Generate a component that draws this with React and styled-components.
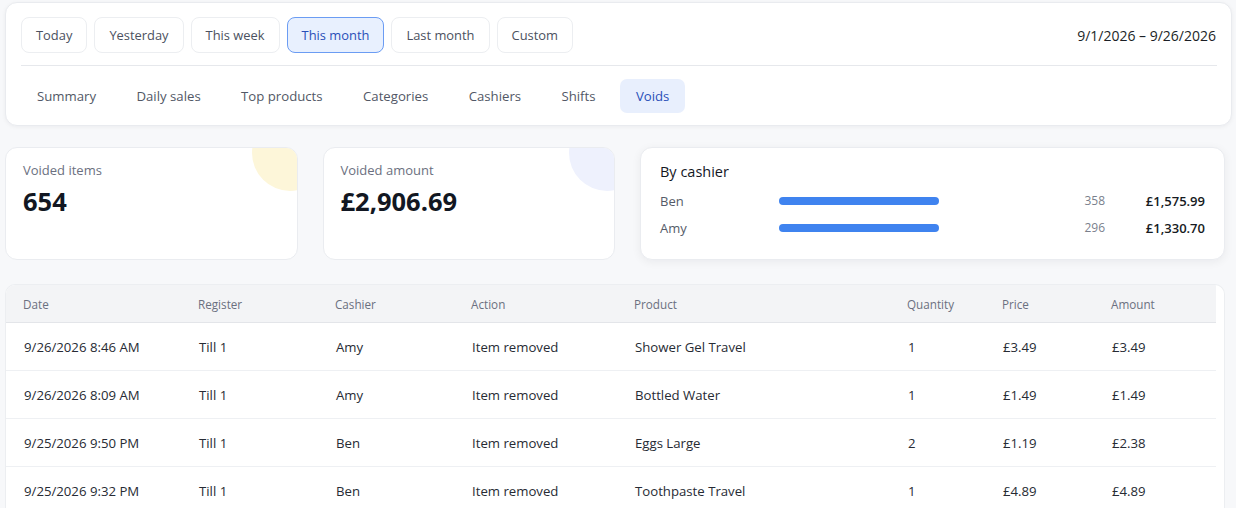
import React from "react";
import styled, { createGlobalStyle } from "styled-components";

const GlobalStyle = createGlobalStyle`
  * { box-sizing: border-box; }
  html, body { margin: 0; padding: 0; }
  body {
    background: #f7f8fa;
    font-family: "Open Sans", "Noto Sans", sans-serif;
    color: #1f2430;
    overflow: hidden;
  }
`;

const Page = styled.div`
  display: flex;
  flex-direction: column;
  height: 100vh;
  padding: 2px 4px 0 5px;
`;

const TopCard = styled.div`
  background: #fff;
  border: 1px solid #e9ebef;
  border-radius: 12px;
  box-shadow: 0 1px 4px rgba(16, 24, 40, 0.05);
  padding: 14px 14px 12px 15px;
`;

const TopRow = styled.div`
  display: flex;
  align-items: center;
  justify-content: space-between;
`;

const Presets = styled.div`
  display: flex;
  gap: 7px;
`;

const PresetButton = styled.button`
  height: 36px;
  padding: 0 14px;
  border-radius: 8px;
  font-family: inherit;
  font-size: 12.9px;
  font-weight: 500;
  cursor: pointer;
  border: 1px solid ${(p) => (p.$active ? "#6b9cf3" : "#eceef1")};
  background: ${(p) => (p.$active ? "#e8f0fe" : "#fff")};
  color: ${(p) => (p.$active ? "#2a4fb8" : "#4b5160")};
`;

const RangeText = styled.div`
  font-size: 14px;
  font-weight: 500;
  color: #1c1f26;
  padding-right: 1px;
`;

const Divider = styled.div`
  height: 1px;
  background: #e6e8ec;
  margin: 12px 0 13px;
`;

const Tabs = styled.div`
  display: flex;
  gap: 8.4px;
`;

const Tab = styled.button`
  height: 34px;
  padding: 0 16px;
  border: none;
  border-radius: 7px;
  font-family: inherit;
  font-size: 13.2px;
  font-weight: 500;
  cursor: pointer;
  background: ${(p) => (p.$active ? "#e8effd" : "transparent")};
  color: ${(p) => (p.$active ? "#2a4fb8" : "#525866")};
`;

const Stats = styled.div`
  display: grid;
  grid-template-columns: 1fr 1fr 2fr;
  gap: 25px;
  margin-top: 21px;
  margin-right: 7px;
`;

const StatCard = styled.div`
  position: relative;
  overflow: hidden;
  height: 113px;
  background: #fff;
  border: 1px solid #eaecf0;
  border-radius: 12px;
  padding: 13px 17px;
`;

const Blob = styled.div`
  position: absolute;
  top: -33px;
  right: -31px;
  width: 76px;
  height: 76px;
  border-radius: 50%;
  background: ${(p) => p.$color};
`;

const StatLabel = styled.div`
  font-size: 13px;
  color: #6b7080;
`;

const StatValue = styled.div`
  margin-top: 5px;
  font-size: 25.5px;
  font-weight: 700;
  color: #121722;
`;

const CashierCard = styled.div`
  height: 113px;
  background: #fff;
  border: 1px solid #eaecf0;
  border-radius: 12px;
  box-shadow: 0 2px 10px rgba(16, 24, 40, 0.06);
  padding: 14px 19px 0 19px;
`;

const CardTitle = styled.div`
  font-size: 14.5px;
  font-weight: 500;
  color: #14171f;
  margin-bottom: 6px;
`;

const CashierRow = styled.div`
  display: grid;
  grid-template-columns: 119px 1fr 60px 100px;
  align-items: center;
  height: 27px;
`;

const CashierName = styled.div`
  font-size: 13px;
  color: #555b68;
`;

const BarTrack = styled.div`
  height: 8px;
`;

const Bar = styled.div`
  height: 8px;
  border-radius: 4px;
  background: #3f83ef;
`;

const CashierCount = styled.div`
  text-align: right;
  font-size: 12px;
  color: #7a7f8c;
`;

const CashierAmount = styled.div`
  text-align: right;
  font-size: 13px;
  font-weight: 600;
  color: #161a22;
`;

const TableCard = styled.div`
  flex: 1;
  min-height: 0;
  display: flex;
  flex-direction: column;
  margin-top: 24px;
  margin-right: 7px;
  background: #fff;
  border: 1px solid #eceef1;
  border-bottom: none;
  border-radius: 10px 10px 0 0;
  overflow: hidden;
`;

const columns = "175px 137px 136px 163px 273px 95px 109px 1fr";

const HeadRow = styled.div`
  display: grid;
  grid-template-columns: ${columns};
  flex-shrink: 0;
  height: 38px;
  align-items: center;
  margin-right: 8px;
  padding-left: 17px;
  background: #f3f4f6;
  border-bottom: 1px solid #e3e5e9;
`;

const HeadCell = styled.div`
  font-size: 11.7px;
  color: #6b7080;
`;

const Body = styled.div`
  flex: 1;
  min-height: 0;
  overflow-y: auto;
  scrollbar-width: none;

  &::-webkit-scrollbar {
    display: none;
  }
`;

const Row = styled.div`
  display: grid;
  grid-template-columns: ${columns};
  height: 48px;
  align-items: center;
  margin-right: 8px;
  padding-left: 18px;
  border-bottom: 1px solid #eef0f3;
`;

const Cell = styled.div`
  font-size: 13.2px;
  color: #272b34;
  white-space: nowrap;
`;

const presets = ["Today", "Yesterday", "This week", "This month", "Last month", "Custom"];
const tabs = ["Summary", "Daily sales", "Top products", "Categories", "Cashiers", "Shifts", "Voids"];

const cashiers = [
  { name: "Ben", count: 358, amount: "£1,575.99", width: 60 },
  { name: "Amy", count: 296, amount: "£1,330.70", width: 60 },
];

const headers = ["Date", "Register", "Cashier", "Action", "Product", "Quantity", "Price", "Amount"];

const firstRows = [
  ["9/26/2026 8:46 AM", "Amy", "Shower Gel Travel", 1, 3.49],
  ["9/26/2026 8:09 AM", "Amy", "Bottled Water", 1, 1.49],
  ["9/25/2026 9:50 PM", "Ben", "Eggs Large", 2, 1.19],
  ["9/25/2026 9:32 PM", "Ben", "Toothpaste Travel", 1, 4.89],
];

const catalogue = [
  ["Bottled Water", 1.49],
  ["Eggs Large", 1.19],
  ["Shower Gel Travel", 3.49],
  ["Toothpaste Travel", 4.89],
  ["Milk Semi Skimmed", 1.25],
  ["White Bread", 1.1],
  ["Crisps Ready Salted", 0.99],
  ["Chocolate Bar", 0.85],
  ["Orange Juice", 2.15],
  ["Bananas", 0.95],
];

// the rest of the month's 654 voids, so the list scrolls like the real one
function buildRows() {
  const rows = firstRows.map(([date, cashier, product, qty, price]) => ({ date, cashier, product, qty, price }));
  let seed = 7;
  const rand = () => {
    seed = (seed * 9301 + 49297) % 233280;
    return seed / 233280;
  };
  let t = new Date(2026, 8, 25, 21, 32).getTime();
  for (let i = rows.length; i < 654; i++) {
    t -= (20 + Math.floor(rand() * 60)) * 60000;
    const d = new Date(t);
    const h = d.getHours();
    const date = `${d.getMonth() + 1}/${d.getDate()}/${d.getFullYear()} ${h % 12 || 12}:${String(d.getMinutes()).padStart(2, "0")} ${h < 12 ? "AM" : "PM"}`;
    const [product, price] = catalogue[Math.floor(rand() * catalogue.length)];
    rows.push({ date, cashier: rand() < 0.55 ? "Ben" : "Amy", product, qty: rand() < 0.8 ? 1 : 2, price });
  }
  return rows;
}

const rows = buildRows();

const money = (n) => `£${n.toFixed(2)}`;

export default function App() {
  return (
    <>
      <GlobalStyle />
      <Page>
        <TopCard>
          <TopRow>
            <Presets>
              {presets.map((p) => (
                <PresetButton key={p} $active={p === "This month"}>
                  {p}
                </PresetButton>
              ))}
            </Presets>
            <RangeText>9/1/2026 – 9/26/2026</RangeText>
          </TopRow>
          <Divider />
          <Tabs>
            {tabs.map((t) => (
              <Tab key={t} $active={t === "Voids"}>
                {t}
              </Tab>
            ))}
          </Tabs>
        </TopCard>

        <Stats>
          <StatCard>
            <Blob $color="#fdf6d9" />
            <StatLabel>Voided items</StatLabel>
            <StatValue>654</StatValue>
          </StatCard>
          <StatCard>
            <Blob $color="#eef1fd" />
            <StatLabel>Voided amount</StatLabel>
            <StatValue>£2,906.69</StatValue>
          </StatCard>
          <CashierCard>
            <CardTitle>By cashier</CardTitle>
            {cashiers.map((c) => (
              <CashierRow key={c.name}>
                <CashierName>{c.name}</CashierName>
                <BarTrack>
                  <Bar style={{ width: `${c.width}%` }} />
                </BarTrack>
                <CashierCount>{c.count}</CashierCount>
                <CashierAmount>{c.amount}</CashierAmount>
              </CashierRow>
            ))}
          </CashierCard>
        </Stats>

        <TableCard>
          <HeadRow>
            {headers.map((h) => (
              <HeadCell key={h}>{h}</HeadCell>
            ))}
          </HeadRow>
          <Body>
            {rows.map((r, i) => (
              <Row key={i}>
                <Cell>{r.date}</Cell>
                <Cell>Till 1</Cell>
                <Cell>{r.cashier}</Cell>
                <Cell>Item removed</Cell>
                <Cell>{r.product}</Cell>
                <Cell>{r.qty}</Cell>
                <Cell>{money(r.price)}</Cell>
                <Cell>{money(r.price * r.qty)}</Cell>
              </Row>
            ))}
          </Body>
        </TableCard>
      </Page>
    </>
  );
}
